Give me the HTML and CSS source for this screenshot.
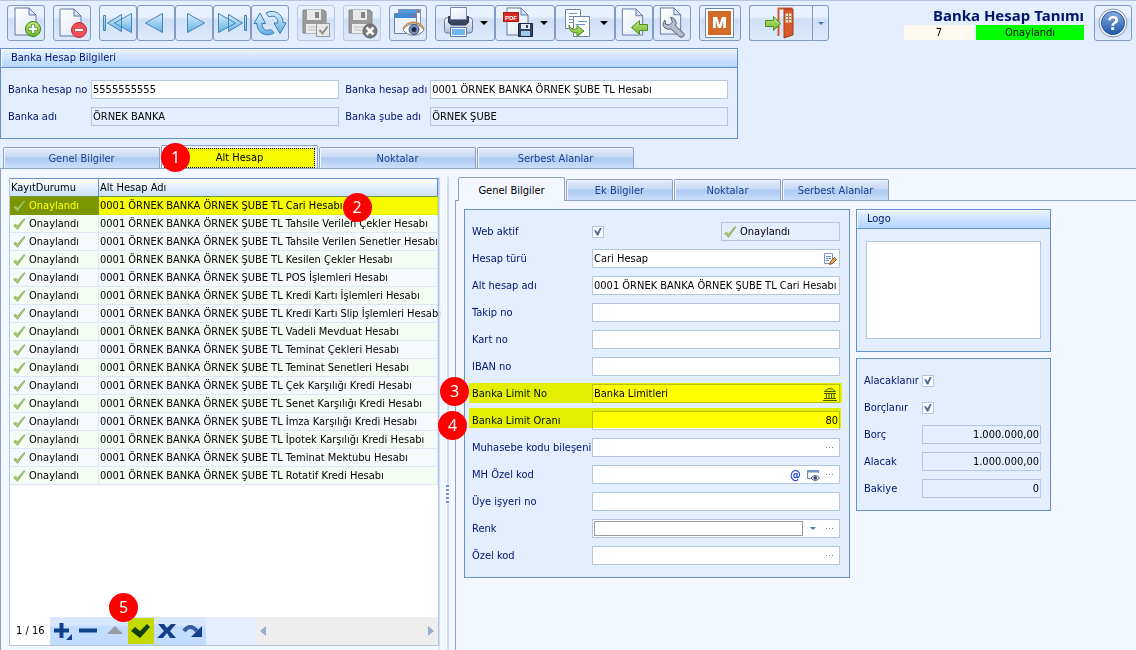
FILE: index.html
```html
<!DOCTYPE html>
<html lang="tr">
<head>
<meta charset="utf-8">
<meta name="viewport" content="width=device-width, initial-scale=1">
<title>Banka Hesap Tanımı</title>
<link rel="stylesheet" href="styles.css">
</head>
<body>
<svg class="defs" aria-hidden="true">
  <defs>
    <linearGradient id="blue" x1="0" y1="0" x2="0" y2="1"><stop offset="0" stop-color="#d9effb"/><stop offset="1" stop-color="#5fb0e2"/></linearGradient>
    <linearGradient id="paper" x1="0" y1="0" x2="1" y2="1"><stop offset="0" stop-color="#ffffff"/><stop offset="1" stop-color="#dfe7f5"/></linearGradient>
    <linearGradient id="green" x1="0" y1="0" x2="0" y2="1"><stop offset="0" stop-color="#c4ea7c"/><stop offset="1" stop-color="#6db52c"/></linearGradient>
    <linearGradient id="help" x1="0" y1="0" x2="0" y2="1"><stop offset="0" stop-color="#86aee2"/><stop offset="1" stop-color="#1f56a8"/></linearGradient>
    <linearGradient id="printer" x1="0" y1="0" x2="0" y2="1"><stop offset="0" stop-color="#f4f6fa"/><stop offset="1" stop-color="#b3bfd4"/></linearGradient>
    <symbol id="tick" viewBox="0 0 14 14"><path d="M1.500 8.500 3.500 7 5.500 9 12 1.500 13 2.200 5.500 12.500Z" fill="#a3cb6e" stroke="#7da552" stroke-width=".6"/></symbol>
    <symbol id="page" viewBox="0 0 24 30"><path d="M1 1H15L22 8V28H1Z" fill="url(#paper)" stroke="#6279a8"/><path d="M15 1V8H22Z" fill="#d3e6fa" stroke="#6279a8"/></symbol>
    <symbol id="floppy" viewBox="0 0 26 26"><path d="M1 1H22L24 3V24H1Z" fill="#9a9a9a" stroke="#888"/><rect x="5" y="1" width="14" height="10" fill="#e8e8e8"/><rect x="13" y="3" width="4" height="6" fill="#858585"/><rect x="4" y="15" width="17" height="9" fill="#ececec"/><path d="M6 18H19M6 21H19" stroke="#bbb"/></symbol>
    <symbol id="dots" viewBox="0 0 10 4"><path d="M1 1.500h1M4 1.500h1M7 1.500h1" stroke="#6f87ac" stroke-width="1"/></symbol>
  </defs>
</svg>

<header class="topbar">
  <div class="tools" role="toolbar" aria-label="Araçlar">
    <button class="tool" aria-label="Yeni"><svg width="34" height="34"><use href="#page" x="5" y="1" width="24" height="30"/><circle cx="24" cy="23" r="7.500" fill="url(#green)" stroke="#39831c"/><path d="M24 18.500v9M19.500 23h9" stroke="#4b8a22" stroke-width="4"/><path d="M24 19v8M20 23h8" stroke="#fff" stroke-width="2.500"/></svg></button>
    <button class="tool" aria-label="Sil"><svg width="34" height="34"><use href="#page" x="4" y="2" width="24" height="30"/><circle cx="24" cy="24" r="7.500" fill="#f3505a" stroke="#c4222f"/><rect x="19.500" y="22.500" width="9" height="3" fill="#fff" stroke="#b7202c" stroke-width=".6"/></svg></button>
    <div class="tool-group">
      <button class="tool" aria-label="İlk"><svg width="34" height="34" fill="url(#blue)" stroke="#4683b8"><path d="M2.500 9.500h2v15h-2zM20.500 8.500v17L6.500 17zM30.500 7.500v19L13.500 17z"/></svg></button>
      <button class="tool" aria-label="Önceki"><svg width="34" height="34"><path d="M23.500 7.500v19L6.500 17z" fill="url(#blue)" stroke="#4683b8"/></svg></button>
      <button class="tool" aria-label="Sonraki"><svg width="34" height="34"><path d="M10.500 7.500v19L27.500 17z" fill="url(#blue)" stroke="#4683b8"/></svg></button>
      <button class="tool" aria-label="Son"><svg width="34" height="34" fill="url(#blue)" stroke="#4683b8"><path d="M29.500 9.500h2v15h-2zM13.500 8.500v17L27.500 17zM3.500 7.500v19L20.500 17z"/></svg></button>
      <button class="tool" aria-label="Yenile"><svg width="34" height="34" fill="url(#blue)" stroke="#3e7ab2"><path d="M4 18C4 26 12 32 21 27L18 23.500C12.500 26 9 22.500 9 17.500H12.500L7 7 1 17.500H4Z"/><path d="M30 16.500C30 8 21 2.500 13 7L16 11C21.500 8.500 25 12 25 17H21L27 27.500 33 17Z"/></svg></button>
    </div>
    <button class="tool" aria-label="Kaydet" disabled><svg width="34" height="34"><use href="#floppy" x="3" y="3" width="26" height="26"/><rect x="17.500" y="17.500" width="13" height="13" fill="#e8e8e8" stroke="#999"/><path d="M20.500 24l3 3.500 5-7" fill="none" stroke="#8d8d8d" stroke-width="2"/></svg></button>
    <button class="tool" aria-label="Vazgeç" disabled><svg width="34" height="34"><use href="#floppy" x="3" y="3" width="26" height="26"/><circle cx="25" cy="25" r="7" fill="#777" stroke="#666"/><path d="M21.500 21.500l7 7M28.500 21.500l-7 7" stroke="#fff" stroke-width="2.500"/></svg></button>
    <button class="tool" aria-label="İzle"><svg width="34" height="34"><path d="M7.500 3.500h22v16h-22z" fill="#f5f9ff" stroke="#7e93bb"/><path d="M8 4h21v3H8z" fill="#4f9bdd"/><path d="M3.500 7.500h22v20h-22z" fill="#e9f2fd" stroke="#6a82b0"/><path d="M4 8h21v4H4z" fill="#3e8cd8"/><path d="M26 5.500h2M22 10h2" stroke="#f05030" stroke-width="2"/><path d="M12 24c5-8 16-8 21 0-5 7-16 7-21 0z" fill="#fff" stroke="#6a7690"/><path d="M12 23c5-9 16-9 21 0" fill="none" stroke="#d18a3c" stroke-width="1.500"/><circle cx="23" cy="23.500" r="5" fill="#7b93bb" stroke="#3f5578"/><circle cx="23" cy="23.500" r="2.500" fill="#1b2942"/></svg></button>
    <div class="tool-group">
      <button class="tool wide" aria-label="Yazdır"><svg width="43" height="34"><g transform="translate(6 0)"><path d="M1.500 14.500q0-3 3-3h22q3 0 3 3v10q0 2.500-3 2.500h-22q-3 0-3-2.500z" fill="url(#printer)" stroke="#6a7b9c"/><path d="M5.500 10.500h20v6l-3 2.500h-14l-3-2.500z" fill="#3b4660" stroke="#2c3753"/><path d="M7.500 1.500h16v12h-16z" fill="url(#paper)" stroke="#7488b0"/><path d="M7.500 21.500h16v9h-16z" fill="#fff" stroke="#5f79a8"/><path d="M9 23h13v6H9z" fill="#6fb9ee"/></g></svg><span class="caret"></span></button>
      <button class="tool wide" aria-label="PDF kaydet"><svg width="43" height="34"><g transform="translate(4 0)"><use href="#page" x="5" y="1" width="24" height="30"/><rect x="2.500" y="6.500" width="15" height="9" fill="#d52b22" stroke="#a81a14"/><text x="4" y="14" class="pdf">PDF</text><path d="M17.500 17.500h14v13h-14z" fill="#34445f" stroke="#1c2740"/><path d="M20 18h9v5h-9z" fill="#dfe9f8"/><path d="M25 19h2v3h-2z" fill="#34445f"/><path d="M20 25h9v5h-9z" fill="#9fc9ef"/></g></svg><span class="caret"></span></button>
      <button class="tool wide" aria-label="Kopyala"><svg width="43" height="34"><g transform="translate(5 1)"><path d="M3.500 2.500h15v19h-15z" fill="#fff" stroke="#7083ae"/><path d="M7 6.500h8M7 9.500h6M7 12.500h6M7 15.500h4" stroke="#6c8fc4"/><path d="M11.500 9.500h16v20h-16z" fill="#fff" stroke="#7083ae"/><path d="M16 14.500h9M14 17.500h9" stroke="#6c8fc4"/><path d="M7 18q1 5 8 4v-3.500l7 5.500-7 5.500V26Q7 26 7 18z" fill="url(#green)" stroke="#4d8b22"/></g></svg><span class="caret"></span></button>
      <button class="tool" aria-label="Geri al"><svg width="34" height="34"><use href="#page" x="4" y="2" width="24" height="29"/><path d="M14.500 21.500l8-7v4h8v6h-8v4z" fill="url(#green)" stroke="#4d8b22"/></svg></button>
      <button class="tool" aria-label="Ayarlar"><svg width="34" height="34"><use href="#page" x="4" y="1" width="24" height="29"/><path d="M10 14q-4 5 0 8 3 2 6 1l9 8q4 1 4.500-3l-9-8q2-4-1-7-2-2-4-1.500l2 4.500-3 3-4-1z" fill="#b4bccb" stroke="#57637d"/></svg></button>
    </div>
    <button class="tool micro" aria-label="M"><svg width="34" height="34"><path d="M2.500 2.500h28v29h-28z" fill="#fff" stroke="#75839d"/><path d="M5 5h23v24H5z" fill="#d46a28"/><text x="16.500" y="22" class="em">M</text></svg></button>
    <div class="split">
      <button class="tool exit" aria-label="Çıkış"><svg width="34" height="34"><path d="M14.500 30V2.500h14" fill="none" stroke="#cf5a2e" stroke-width="2"/><path d="M20 3h9v26l-9 3z" fill="#d9572c" stroke="#a93c19"/><path d="M21.500 7.500h6v9h-6z" fill="#f0e4cf"/><path d="M24.500 7.500v9M21.500 10.500h6M21.500 13.500h6" stroke="#a87a52"/><path d="M1.500 14.500h8v-4l7 7-7 7v-4h-8z" fill="url(#green)" stroke="#4d8b22"/></svg></button>
      <button class="tool thin" aria-label="Çıkış seçenekleri"><span class="caret small"></span></button>
    </div>
  </div>
  <div class="heading">
    <h1>Banka Hesap Tanımı</h1>
    <div class="states"><span class="count">7</span><span class="state">Onaylandı</span></div>
  </div>
  <button class="tool help" aria-label="Yardım"><svg width="34" height="34"><circle cx="17" cy="17" r="14" fill="#f2f6fc" stroke="#8797b2"/><circle cx="17" cy="17" r="11.500" fill="url(#help)" stroke="#23559e"/><text x="17" y="24" class="question">?</text></svg></button>
</header>

<section class="box account">
  <h2 class="box-title">Banka Hesap Bilgileri</h2>
  <div class="account-grid">
    <label for="no">Banka hesap no</label><input id="no" class="field" value="5555555555">
    <label for="ad">Banka hesap adı</label><input id="ad" class="field" value="0001 ÖRNEK BANKA ÖRNEK ŞUBE TL Hesabı">
    <label for="banka">Banka adı</label><input id="banka" class="field" value="ÖRNEK BANKA" readonly>
    <label for="sube">Banka şube adı</label><input id="sube" class="field" value="ÖRNEK ŞUBE" readonly>
  </div>
</section>

<nav class="tabs main-tabs" role="tablist">
  <button class="tab" role="tab">Genel Bilgiler</button>
  <button class="tab active" role="tab" aria-selected="true"><span class="marked">Alt Hesap</span><span class="badge b1">1</span></button>
  <button class="tab" role="tab">Noktalar</button>
  <button class="tab" role="tab">Serbest Alanlar</button>
</nav>

<main class="workspace">
  <section class="list">
    <table>
      <colgroup><col class="status-col"><col></colgroup>
      <thead><tr><th>KayıtDurumu</th><th>Alt Hesap Adı</th></tr></thead>
      <tbody>
        <tr class="selected"><td><svg><use href="#tick"/></svg>Onaylandı</td><td><span class="anchor">0001 ÖRNEK BANKA ÖRNEK ŞUBE TL Cari Hesabı<span class="badge b2">2</span></span></td></tr>
        <tr><td><svg><use href="#tick"/></svg>Onaylandı</td><td>0001 ÖRNEK BANKA ÖRNEK ŞUBE TL Tahsile Verilen Çekler Hesabı</td></tr>
        <tr><td><svg><use href="#tick"/></svg>Onaylandı</td><td>0001 ÖRNEK BANKA ÖRNEK ŞUBE TL Tahsile Verilen Senetler Hesabı</td></tr>
        <tr><td><svg><use href="#tick"/></svg>Onaylandı</td><td>0001 ÖRNEK BANKA ÖRNEK ŞUBE TL Kesilen Çekler Hesabı</td></tr>
        <tr><td><svg><use href="#tick"/></svg>Onaylandı</td><td>0001 ÖRNEK BANKA ÖRNEK ŞUBE TL POS İşlemleri Hesabı</td></tr>
        <tr><td><svg><use href="#tick"/></svg>Onaylandı</td><td>0001 ÖRNEK BANKA ÖRNEK ŞUBE TL Kredi Kartı İşlemleri Hesabı</td></tr>
        <tr><td><svg><use href="#tick"/></svg>Onaylandı</td><td>0001 ÖRNEK BANKA ÖRNEK ŞUBE TL Kredi Kartı Slip İşlemleri Hesabı</td></tr>
        <tr><td><svg><use href="#tick"/></svg>Onaylandı</td><td>0001 ÖRNEK BANKA ÖRNEK ŞUBE TL Vadeli Mevduat Hesabı</td></tr>
        <tr><td><svg><use href="#tick"/></svg>Onaylandı</td><td>0001 ÖRNEK BANKA ÖRNEK ŞUBE TL Teminat Çekleri Hesabı</td></tr>
        <tr><td><svg><use href="#tick"/></svg>Onaylandı</td><td>0001 ÖRNEK BANKA ÖRNEK ŞUBE TL Teminat Senetleri Hesabı</td></tr>
        <tr><td><svg><use href="#tick"/></svg>Onaylandı</td><td>0001 ÖRNEK BANKA ÖRNEK ŞUBE TL Çek Karşılığı Kredi Hesabı</td></tr>
        <tr><td><svg><use href="#tick"/></svg>Onaylandı</td><td>0001 ÖRNEK BANKA ÖRNEK ŞUBE TL Senet Karşılığı Kredi Hesabı</td></tr>
        <tr><td><svg><use href="#tick"/></svg>Onaylandı</td><td>0001 ÖRNEK BANKA ÖRNEK ŞUBE TL İmza Karşılığı Kredi Hesabı</td></tr>
        <tr><td><svg><use href="#tick"/></svg>Onaylandı</td><td>0001 ÖRNEK BANKA ÖRNEK ŞUBE TL İpotek Karşılığı Kredi Hesabı</td></tr>
        <tr><td><svg><use href="#tick"/></svg>Onaylandı</td><td>0001 ÖRNEK BANKA ÖRNEK ŞUBE TL Teminat Mektubu Hesabı</td></tr>
        <tr><td><svg><use href="#tick"/></svg>Onaylandı</td><td>0001 ÖRNEK BANKA ÖRNEK ŞUBE TL Rotatif Kredi Hesabı</td></tr>
      </tbody>
    </table>
    <footer class="navigator">
      <span class="position">1 / 16</span>
      <div class="nav-buttons">
        <button aria-label="Ekle"><svg width="26" height="26"><path d="M4 12.500h15M11.500 5v15" stroke="#123f8c" stroke-width="4"/><path d="M22 16v6h-6z" fill="#123f8c"/></svg></button>
        <button aria-label="Çıkar"><svg width="26" height="26"><path d="M3 12.500h18" stroke="#123f8c" stroke-width="4"/></svg></button>
        <button aria-label="Düzenle"><svg width="26" height="26"><path d="M5 16l8-8 8 8z" fill="#959aa3"/></svg></button>
        <button class="post" aria-label="Onayla"><svg width="26" height="26"><path d="M3 13l4-4 5 4 7-7 3 3-10 11z" fill="#123f10"/></svg><span class="badge b5">5</span></button>
        <button aria-label="İptal"><svg width="26" height="26"><path d="M4 6h6l3 4 4-4h5l-6 7 6 7h-6l-3-5-4 5H3l7-7z" fill="#123f8c"/></svg></button>
        <button aria-label="Yenile"><svg width="26" height="26"><path d="M4 13q6-8 13 0" fill="none" stroke="#355d9e" stroke-width="4"/><path d="M22 8v11H11z" fill="#123f8c"/></svg></button>
      </div>
      <div class="scroll"><svg width="6" height="10"><path d="M6 0v10L0 5z" fill="#9aaccb"/></svg><svg width="6" height="10"><path d="M0 0v10l6-5z" fill="#9aaccb"/></svg></div>
    </footer>
  </section>

  <div class="splitter"><span class="grip"></span></div>

  <section class="detail">
    <nav class="tabs detail-tabs" role="tablist">
      <button class="tab active" role="tab" aria-selected="true">Genel Bilgiler</button>
      <button class="tab" role="tab">Ek Bilgiler</button>
      <button class="tab" role="tab">Noktalar</button>
      <button class="tab" role="tab">Serbest Alanlar</button>
    </nav>
    <div class="detail-body">
      <form class="box form">
        <div class="row"><label for="web">Web aktif</label><div class="web"><input id="web" type="checkbox" checked><span class="approved"><svg><use href="#tick"/></svg>Onaylandı</span></div></div>
        <div class="row"><label for="tur">Hesap türü</label><div class="field combo"><input id="tur" value="Cari Hesap"><button type="button" aria-label="Seç"><svg width="14" height="14"><path d="M1.500 1.500h8v10h-8z" fill="#fff" stroke="#7f98be"/><path d="M3 4.500h5M3 6.500h5M3 8.500h3" stroke="#6f8ab5"/><path d="M6.500 12.500l1-3 4-4 2 2-4 4z" fill="#eda64f" stroke="#80572e"/></svg></button></div></div>
        <div class="row"><label for="alt">Alt hesap adı</label><input id="alt" class="field" value="0001 ÖRNEK BANKA ÖRNEK ŞUBE TL Cari Hesabı"></div>
        <div class="row"><label for="takip">Takip no</label><input id="takip" class="field"></div>
        <div class="row"><label for="kart">Kart no</label><input id="kart" class="field"></div>
        <div class="row"><label for="iban">IBAN no</label><input id="iban" class="field"></div>
        <div class="row"><label for="limit">Banka Limit No</label><div class="field combo"><input id="limit" value="Banka Limitleri"><button type="button" aria-label="Limit seç"><svg width="14" height="14"><path d="M1.500 4.500q5.500-6 11 0zM1 6.500h12M1 11.500h12M0 13.500h14M3.500 7v4M6 7v4M8.500 7v4M11 7v4" fill="none" stroke="#3c5f96"/></svg></button></div><span class="marker m3"></span><span class="badge b3">3</span></div>
        <div class="row"><label for="oran">Banka Limit Oranı</label><input id="oran" class="field number" value="80"><span class="marker m4"></span><span class="badge b4">4</span></div>
        <div class="row"><label for="muh">Muhasebe kodu bileşeni</label><div class="field combo"><input id="muh"><button type="button" aria-label="Diğer"><svg class="dots"><use href="#dots"/></svg></button></div></div>
        <div class="row"><label for="mh">MH Özel kod</label><div class="field combo"><input id="mh"><button type="button" class="at">@</button><button type="button" aria-label="Göster"><svg width="14" height="14"><path d="M12.500 5V2.500h-11v8H5" fill="#fff" stroke="#6687b6"/><path d="M1 2h12v2.500H1z" fill="#6d94c8"/><path d="M5 10q4-5 8.500 0-4.500 5-8.500 0z" fill="#dce3ef" stroke="#52627f"/><circle cx="9.300" cy="10" r="1.800" fill="#34486f"/></svg></button><button type="button" aria-label="Diğer"><svg class="dots"><use href="#dots"/></svg></button></div></div>
        <div class="row"><label for="uye">Üye işyeri no</label><input id="uye" class="field"></div>
        <div class="row"><label for="renk">Renk</label><div class="field combo"><select id="renk"><option></option></select><button type="button" aria-label="Renk aç"><span class="caret small"></span></button><button type="button" aria-label="Diğer"><svg class="dots"><use href="#dots"/></svg></button></div></div>
        <div class="row"><label for="ozel">Özel kod</label><div class="field combo"><input id="ozel"><button type="button" aria-label="Diğer"><svg class="dots"><use href="#dots"/></svg></button></div></div>
      </form>
      <aside class="side">
        <section class="box"><h2 class="box-title">Logo</h2><div class="logo-area"><div class="logo"></div></div></section>
        <form class="box form balance">
          <div class="row"><label for="alc">Alacaklanır</label><input id="alc" type="checkbox" checked></div>
          <div class="row"><label for="brl">Borçlanır</label><input id="brl" type="checkbox" checked></div>
          <div class="row"><label for="borc">Borç</label><input id="borc" class="field number" value="1.000.000,00" readonly></div>
          <div class="row"><label for="alacak">Alacak</label><input id="alacak" class="field number" value="1.000.000,00" readonly></div>
          <div class="row"><label for="bakiye">Bakiye</label><input id="bakiye" class="field number" value="0" readonly></div>
        </form>
      </aside>
    </div>
  </section>
</main>
</body>
</html>
```
FILE: styles.css
```css
* { box-sizing: border-box; }
:root {
  --ui: "DejaVu Sans Condensed", "Noto Sans", sans-serif;
  --panel: #e3eeff;
  --sheet: #f3f7ff;
  --line: #6490cc;
  --tab-line: #8ea2c8;
  --field-line: #b4c7e1;
  --ink: #00146e;
}
body {
  margin: 0;
  min-height: 100vh;
  display: flex;
  flex-direction: column;
  background: var(--panel);
  color: #000;
  font: 11px/18px var(--ui);
}
button, input, select { font: inherit; color: inherit; }
button { padding: 0; border: 0; background: none; }
svg { display: block; }
.defs { position: absolute; width: 0; height: 0; }

.topbar {
  display: flex;
  height: 48px;
  padding: 4px 4px 0 7px;
  border-top: 1px solid #b4c8e2;
}
.tools { display: flex; gap: 8px; flex: 1; }
.tool-group, .split { display: flex; }
.tool {
  display: flex;
  align-items: center;
  width: 38px;
  height: 36px;
  padding: 0 1px;
  border: 1px solid #7f9bc6;
  border-radius: 3px;
  background: linear-gradient(#e8f2ff 0 30%, #cfdff4 40%, #dceafd);
}
.tool:disabled { border-color: #b8c8e0; }
.tool.wide { width: 60px; }
.tool.micro { width: 42px; padding: 0 3px; }
.tool.exit { width: 63px; padding-left: 14px; border-radius: 3px 0 0 3px; border-right: 0; }
.tool.thin { width: 17px; justify-content: center; border-radius: 0 3px 3px 0; }
.caret {
  border: 4px solid transparent;
  border-top-color: #000;
  border-bottom: 0;
}
.caret.small { border-width: 3px 3px 0; border-top-color: #4477b4; }
.pdf { font: bold 6px "Liberation Sans", sans-serif; fill: #fff; }
.em { font: 900 16px "Noto Sans", sans-serif; fill: #fff; text-anchor: middle; }
.question { font: bold 20px "Liberation Sans", sans-serif; fill: #fff; text-anchor: middle; }
.heading { width: 180px; margin-right: 10px; }
h1 {
  margin: 0;
  font: bold 15px/20px "Noto Sans", sans-serif;
  color: var(--ink);
  text-align: right;
}
.states { display: flex; justify-content: flex-end; gap: 2px; line-height: 16px; text-align: center; }
.states span { height: 15px; }
.count { width: 70px; background: #fffaf0; }
.state { width: 108px; background: #00ff00; }

.box { border: 1px solid var(--line); background: var(--panel); }
.box-title {
  margin: 0;
  padding: 0 10px;
  border-bottom: 1px solid var(--line);
  background: linear-gradient(#e9f3ff, #b5d4ff);
  font: 11px/18px var(--ui);
  color: var(--ink);
  box-shadow: inset 1px 1px #fff;
}
.account { width: 65%; }
.account-grid {
  display: grid;
  grid-template-columns: 77px 248fr 79px 298fr;
  column-gap: 6px;
  row-gap: 8px;
  padding: 12px 9px 12px 7px;
}
label { color: var(--ink); white-space: nowrap; line-height: 19px; }
.field {
  width: 100%;
  min-width: 0;
  height: 19px;
  padding: 0 1px;
  border: 1px solid var(--field-line);
  background: #fff;
  outline: 0;
}
.field:read-only:is(input) { background: var(--panel); }
.number { text-align: right; }

.tabs { display: flex; align-items: flex-end; gap: 1px; }
.tab {
  position: relative;
  flex: 0 1 157px;
  height: 21px;
  padding-top: 2px;
  border: 1px solid var(--tab-line);
  border-bottom: 0;
  border-radius: 2px 2px 0 0;
  background: linear-gradient(#e2ecfa, #c7daf3 45%, #abc9ef 50%, #cbdffb);
  box-shadow: inset 1px 1px #f2f7ff;
  color: #1c4490;
}
.tab.active { background: var(--sheet); color: #000; }
.main-tabs { padding: 6px 3px 0; }
.main-tabs .active { height: 23px; padding: 2px; }
.marked { display: block; line-height: 18px; border: 1px dotted #000; background: #f7fb00; }

.workspace {
  flex: 1;
  display: grid;
  grid-template-columns: minmax(0, 430fr) 16px minmax(0, 681fr);
  padding-left: 8px;
  border-top: 1px solid var(--tab-line);
  border-left: 1px solid var(--tab-line);
  background: var(--sheet);
}
.list {
  display: flex;
  flex-direction: column;
  margin: 9px 0 4px;
  border: 1px solid #b4c7e1;
  border-top-color: var(--line);
  background: #fff;
}
table { width: 100%; table-layout: fixed; border-collapse: separate; border-spacing: 0; }
.status-col { width: 89px; }
th {
  height: 18px;
  padding: 1px 1px 0;
  border-right: 1px solid var(--line);
  border-bottom: 1px solid #6f9a3c;
  background: linear-gradient(#fff, #c9dffc);
  font-weight: normal;
  text-align: left;
  line-height: 16px;
}
td {
  height: 18px;
  padding: 1px 1px 0;
  border-right: 1px solid #dce8fa;
  border-bottom: 1px solid #dce8fa;
  background: #f6faff;
  line-height: 16px;
  white-space: nowrap;
}
tr:nth-child(even) td { background: #f4fcf3; }
td svg { float: left; width: 14px; height: 14px; margin: 1px 3px 0 1px; }
.selected td:first-child { background: #7c9600; color: #ff0; border-color: #7c9600; }
.selected td:last-child { background: #f7fb00; border-color: #e4ec00; }
.anchor { position: relative; }

.navigator { display: flex; margin-top: auto; height: 28px; line-height: 28px; background: #fff; }
.position { width: 40px; padding-left: 6px; }
.nav-buttons { display: flex; position: relative; z-index: 1; background: linear-gradient(#d6e7ff 30%, #c1dcff 35%); }
.nav-buttons button { position: relative; width: 26px; }
.nav-buttons .post svg { background: #c3d900; }
.scroll {
  flex: 1;
  display: flex;
  align-items: center;
  justify-content: space-between;
  margin-left: 50px;
  padding: 0 4px;
  background: #eee;
  box-shadow: -50px 0 var(--panel);
}

.splitter {
  display: flex;
  margin-top: 8px;
  border-left: 7px solid transparent;
  background: linear-gradient(90deg, #fff 1px, #c9e0fc 1px 3px, transparent 3px);
}
.grip { align-self: end; width: 3px; height: 18px; margin-bottom: 147px; background: repeating-linear-gradient(#6c94cc 0 2px, #f3f7ff 2px 4px); }

.detail { display: flex; flex-direction: column; padding-top: 8px; }
.detail-tabs { padding-left: 3px; }
.detail-tabs .tab { flex-basis: 107px; }
.detail-tabs .tab.active { height: 24px; margin-bottom: -1px; z-index: 1; }
.detail-body {
  flex: 1;
  display: grid;
  grid-template-columns: 386fr 195fr 79fr;
  column-gap: 6px;
  align-items: start;
  padding: 8px 0 8px 8px;
  border: solid var(--tab-line);
  border-width: 1px 0 0 1px;
}
.form { display: grid; gap: 8px; padding: 12px 9px 12px 7px; }
.row {
  position: relative;
  display: grid;
  grid-template-columns: 120px minmax(0, 1fr);
  align-items: center;
  height: 19px;
}
.balance .row { grid-template-columns: 58px minmax(0, 1fr); }
.side { display: grid; gap: 6px; }
.logo-area { padding: 12px 9px; }
.logo { height: 98px; border: 1px solid var(--field-line); background: #fff; }
.web { display: flex; align-items: center; justify-content: space-between; }
.approved {
  display: flex;
  align-items: center;
  gap: 3px;
  width: 119px;
  height: 19px;
  padding-left: 1px;
  border: 1px solid var(--field-line);
}
.approved svg { width: 14px; height: 14px; }
input[type="checkbox"] {
  appearance: none;
  width: 12px;
  height: 12px;
  margin: 0;
  border: 1px solid var(--field-line);
  background: #fff;
  display: grid;
  place-items: center;
}
input[type="checkbox"]::before {
  content: "";
  width: 8px;
  height: 8px;
  background: #4d6f9f;
  clip-path: polygon(0 35%, 25% 35%, 45% 60%, 75% 0, 100% 0, 55% 100%, 35% 100%);
}
.combo { display: flex; align-items: center; padding-right: 1px; }
.combo input { flex: 1; min-width: 0; height: 17px; padding: 0; border: 0; outline: 0; background: none; }
.combo button { display: grid; place-items: center; width: 17px; height: 17px; }
.combo .at { font-weight: bold; color: #1f3fe0; font-size: 12px; }
.combo select { flex: 1; appearance: none; height: 15px; margin-right: 1px; border: 1px solid #9b9b9b; background: #fff; }
.dots { width: 10px; height: 4px; }

.marker { position: absolute; left: -3px; background: #ff0; height: 20px; mix-blend-mode: multiply; }
.m3 { right: -2px; top: -1px; }
.m4 { right: -1px; top: -3px; }
.badge {
  position: absolute;
  z-index: 2;
  width: 29px;
  height: 29px;
  border-radius: 50%;
  background: #f00;
  color: #fff;
  font: 16px/29px "Noto Sans", sans-serif;
  text-align: center;
}
.b1 { left: -1px; top: -3px; }
.b2 { left: 100%; top: -6px; }
.b3 { left: -32px; top: -7px; }
.b4 { left: -34px; top: 0; }
.b5 { left: -19px; top: -24px; }
```
